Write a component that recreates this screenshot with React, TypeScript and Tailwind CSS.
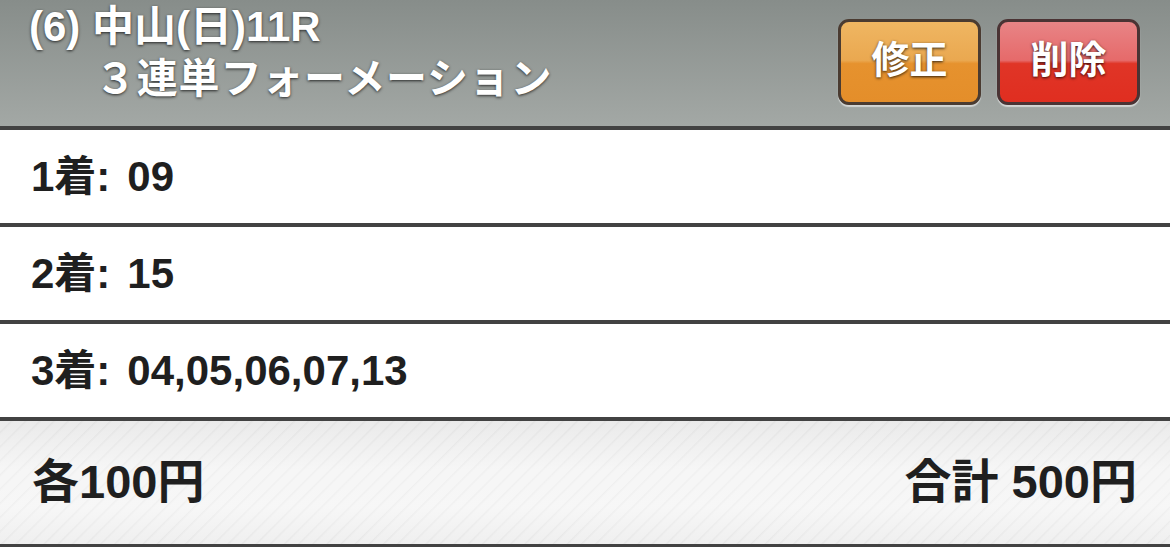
import React from "react";

const font = "font-['Liberation_Sans','Noto_Sans_CJK_JP',sans-serif]";

export default function App() {
  const rows = [
    { label: "1着:", value: "09" },
    { label: "2着:", value: "15" },
    { label: "3着:", value: "04,05,06,07,13" },
  ];
  return (
    <div className={`w-[1170px] h-[550px] overflow-hidden ${font} font-bold`}>
      <div className="h-[130px] border-b-4 border-[#424242] bg-[linear-gradient(to_bottom,#878d8a,#a3a8a5)] flex items-start justify-between">
        <div className="pl-[29px] pt-[4px] text-white [text-shadow:0_1px_3px_rgba(0,0,0,0.75)]">
          <div className="text-[42px] leading-[46px]">(6) 中山(日)11R</div>
          <div className="text-[41px] leading-[50px] pl-[66px] pt-[4px] tracking-[0.8px]">３連単フォーメーション</div>
        </div>
        <div className="flex gap-[16px] pt-[19px] pr-[30px]">
          <button className="w-[143px] h-[86px] rounded-[11px] border-[3px] border-[#4a3b31] bg-[linear-gradient(to_bottom,#efb662_0%,#eaa850_48%,#e6922e_52%,#e48e2a_100%)] shadow-[0_2px_1px_rgba(255,255,255,0.55)] text-white text-[38px] [text-shadow:0_1px_3px_rgba(0,0,0,0.8)] flex items-center justify-center pb-[4px]">
            修正
          </button>
          <button className="w-[143px] h-[86px] rounded-[11px] border-[3px] border-[#4a3334] bg-[linear-gradient(to_bottom,#e88486_0%,#e66a6a_48%,#e03527_52%,#e02e20_100%)] shadow-[0_2px_1px_rgba(255,255,255,0.55)] text-white text-[38px] [text-shadow:0_1px_3px_rgba(0,0,0,0.8)] flex items-center justify-center pb-[4px]">
            削除
          </button>
        </div>
      </div>
      {rows.map((r) => (
        <div
          key={r.label}
          className="h-[97px] border-b-4 border-[#424242] bg-white flex items-center pl-[31px] text-[42px] text-[#1f1f1f]"
        >
          <span>{r.label}</span>
          <span className="ml-[17px]">{r.value}</span>
        </div>
      ))}
      <div className="relative h-[126px] border-b-[3px] border-[#424242] bg-[#f4f4f4] flex items-center justify-between pl-[32px] pr-[33px] text-[47px] text-[#1f1f1f]">
        <div className="absolute inset-0 bg-[repeating-linear-gradient(135deg,rgba(255,255,255,0)_0px,rgba(255,255,255,0)_7px,rgba(220,220,220,0.35)_8px,rgba(255,255,255,0)_10px)]" />
        <div className="absolute inset-0 bg-[linear-gradient(to_bottom,rgba(0,0,0,0.04),rgba(255,255,255,0.2)_40%,rgba(255,255,255,0.25)_70%,rgba(0,0,0,0.02))]" />
        <span className="relative">各100円</span>
        <span className="relative">合計 500円</span>
      </div>
    </div>
  );
}
